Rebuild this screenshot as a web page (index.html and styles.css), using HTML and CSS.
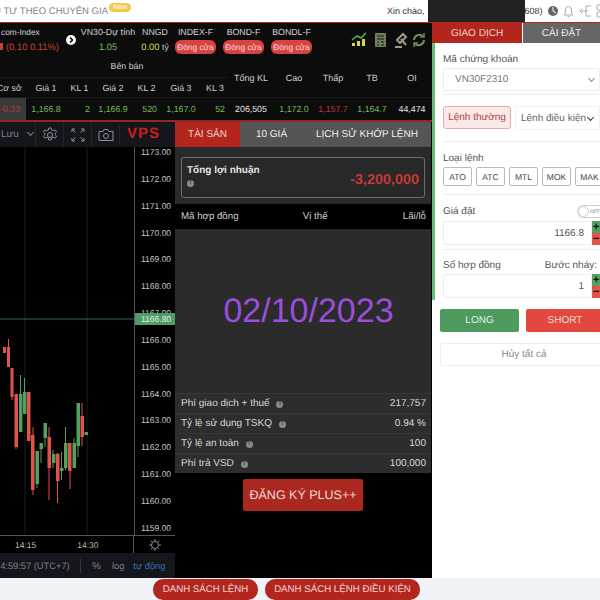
FILE: index.html
```html
<!DOCTYPE html>
<html>
<head>
	<title>Giao dịch phái sinh</title>
	<meta http-equiv="Content-Type" content="text/html;charset=utf-8" />
	<link rel="stylesheet" href="styles.css">
</head>
<body>

<div class="topbar">
	<div class="top-left"><span class="top-link">ĐẦU TƯ THEO CHUYÊN GIA</span><span class="new-tag">New</span></div>
	<div class="top-right">
		<span class="hello">Xin chào,</span>
		<span class="hidden-name"></span>
		<span class="hello">608)</span>
		<svg class="top-icons" width="52" height="16" viewBox="0 0 52 16">
			<circle cx="5" cy="8" r="5" fill="#666"/>
			<path d="M5 4v4l3 2" stroke="#fff" fill="none"/>
			<path d="M25 12h-9c1-1 1.500-2 1.500-5a3 3.500 0 0 1 6 0c0 3 .5 4 1.500 5zM19.500 13.500h2" stroke="#aaa" fill="none"/>
			<path d="M43 3h-5v10h5M40 8h-8M34.500 5.500L32 8l2.500 2.500" stroke="#aaa" fill="none"/>
			<rect x="49" y="2" width="6" height="5" rx="1" stroke="#aaa" fill="none"/>
			<rect x="49" y="9" width="6" height="5" rx="1" stroke="#aaa" fill="none"/>
		</svg>
	</div>
</div>

<div class="main">
	<div class="left">
		<div class="quotes">
			<div class="market">
				<div class="m-index"><div class="m-name">com-Index</div><div class="m-val red"><span class="down-arrow"></span>(0.10 0.11%)</div></div>
				<div class="m-next"><svg width="10" height="10" viewBox="0 0 10 10"><circle cx="5" cy="5" r="5" fill="#fff"/><path d="M4 2.500L6.500 5L4 7.500" stroke="#000" stroke-width="1.500" fill="none"/></svg></div>
				<div class="m-vn30"><div class="m-name">VN30-Dự tính</div><div class="m-val green">1.05</div></div>
				<div class="m-nngd"><div class="m-name">NNGD</div><div class="m-val"><span class="yellow">0.00</span> <span class="unit">tỷ</span></div></div>
				<div class="m-fut"><div class="m-name">INDEX-F</div><div class="pill">Đóng cửa</div></div>
				<div class="m-fut"><div class="m-name">BOND-F</div><div class="pill">Đóng cửa</div></div>
				<div class="m-fut"><div class="m-name">BONDL-F</div><div class="pill">Đóng cửa</div></div>
				<svg class="m-tools" width="76" height="16" viewBox="0 0 76 16">
					<path d="M1 14v-3h3v3zM6 14V9h3v5zM11 14V7h3v7z" fill="#d8d84a"/>
					<path d="M1 8l5-4 4 2 5-5" stroke="#5fb04f" stroke-width="1.500" fill="none"/>
					<rect x="24" y="1" width="11" height="14" rx="1" fill="#6d7f5c"/>
					<path d="M26 4h7M26 7h7M26 10h2M30 10h3M26 13h2M30 13h3" stroke="#1a1a1a"/>
					<path d="M44 15h7M46 8l6-6 3 3-6 6zM50 7l5 6" stroke="#9a9a8a" stroke-width="2" fill="none"/>
					<path d="M63 8a5.500 5.500 0 0 1 9-4M73 8a5.500 5.500 0 0 1-9 4" stroke="#6d8f5c" stroke-width="2" fill="none"/>
					<path d="M73 1v4h-4M63 15v-4h4" stroke="#6d8f5c" stroke-width="1.500" fill="none"/>
				</svg>
			</div>
			<div class="grid">
				<div class="g-spacer"></div>
				<div class="g-sell">Bên bán</div>
				<div class="g-total">Tổng KL</div>
				<div class="g-high">Cao</div>
				<div class="g-low">Thấp</div>
				<div class="g-avg">TB</div>
				<div class="g-oi">OI</div>
				<div class="g-head g-first">Cơ sở</div>
				<div class="g-head">Giá 1</div>
				<div class="g-head">KL 1</div>
				<div class="g-head">Giá 2</div>
				<div class="g-head">KL 2</div>
				<div class="g-head">Giá 3</div>
				<div class="g-head">KL 3</div>
				<div class="g-cell g-basis red">-0.33</div>
				<div class="g-cell green">1,166.8</div>
				<div class="g-cell g-qty green">2</div>
				<div class="g-cell green">1,166.9</div>
				<div class="g-cell g-qty green">520</div>
				<div class="g-cell green">1,167.0</div>
				<div class="g-cell g-qty green">52</div>
				<div class="g-cell">206,505</div>
				<div class="g-cell green">1,172.0</div>
				<div class="g-cell red">1,157.7</div>
				<div class="g-cell green">1,164.7</div>
				<div class="g-cell">44,474</div>
			</div>
		</div>

		<div class="lower">
			<div class="chart">
				<div class="chart-tools">
					<span class="save">Lưu <span class="caret"></span></span>
					<span class="tool"><svg width="16" height="16" viewBox="0 0 16 16" fill="none" stroke="#8b8e96"><circle cx="8" cy="8" r="2.500"/><path d="M6.800 1h2.400l.4 2 1.700.8 1.800-1 1.500 2-1.400 1.400v1.600l1.400 1.400-1.500 2-1.800-1-1.700.8-.4 2H6.800l-.4-2-1.700-.8-1.800 1-1.500-2 1.400-1.400V6.200L1.400 4.800l1.500-2 1.800 1 1.700-.8z"/></svg></span>
					<span class="tool"><svg width="14" height="14" viewBox="0 0 14 14" fill="none" stroke="#8b8e96"><path d="M1 4V1h3M10 1h3v3M13 10v3h-3M4 13H1v-3M1 1l3.500 3.500M13 1L9.500 4.500M13 13L9.500 9.500M1 13l3.500-3.500"/></svg></span>
					<span class="tool"><svg width="16" height="14" viewBox="0 0 16 14" fill="none" stroke="#8b8e96"><path d="M1 3.500h4l1-2h4l1 2h4v9H1z"/><circle cx="8" cy="8" r="2.500"/></svg></span>
					<span class="vps">VPS</span>
				</div>
				<div class="chart-body">
					<div class="plot">
						<svg width="134" height="388" viewBox="0 147 134 388">
							<g stroke="#1a1c20">
								<line x1="25" y1="147" x2="25" y2="535"/>
								<line x1="87" y1="147" x2="87" y2="535"/>
							</g>
							<line x1="0" y1="319" x2="134" y2="319" stroke="#3d6b4a"/>
							<g class="bear">
								<rect x="3" y="347" width="3" height="6"/>
								<rect x="7" y="347" width="3" height="20"/>
								<line x1="8.500" y1="339" x2="8.500" y2="347"/>
								<rect x="10.500" y="368" width="3" height="29"/>
								<line x1="12" y1="397" x2="12" y2="400"/>
								<rect x="14.500" y="394" width="3.500" height="53"/>
								<line x1="16" y1="447" x2="16" y2="449"/>
								<rect x="27" y="392" width="3.500" height="49"/>
								<rect x="31" y="435" width="3.500" height="55"/>
								<line x1="33" y1="427" x2="33" y2="495"/>
								<rect x="47.500" y="437" width="3.500" height="31"/>
								<line x1="49" y1="427" x2="49" y2="500"/>
								<rect x="56" y="454" width="3.500" height="27"/>
								<line x1="57.500" y1="453" x2="57.500" y2="503"/>
								<rect x="68" y="443" width="3.500" height="28"/>
								<line x1="70" y1="443" x2="70" y2="489"/>
								<rect x="80.500" y="416" width="3.500" height="21"/>
								<line x1="82" y1="403" x2="82" y2="446"/>
							</g>
							<g class="bull">
								<rect x="19" y="394" width="3.500" height="38"/>
								<line x1="20.500" y1="375" x2="20.500" y2="394"/>
								<rect x="23" y="392" width="3.500" height="22"/>
								<line x1="24.500" y1="378" x2="24.500" y2="392"/>
								<rect x="35.500" y="451" width="3.500" height="33"/>
								<line x1="37" y1="484" x2="37" y2="488"/>
								<rect x="39.500" y="443" width="3.500" height="6"/>
								<line x1="41" y1="449" x2="41" y2="463"/>
								<rect x="43.500" y="423" width="3.500" height="15"/>
								<line x1="45" y1="438" x2="45" y2="447"/>
								<rect x="52" y="454" width="3.500" height="9"/>
								<line x1="53" y1="450" x2="53" y2="468"/>
								<rect x="60" y="468" width="3.500" height="3"/>
								<line x1="61.500" y1="452" x2="61.500" y2="480"/>
								<rect x="64" y="443" width="3.500" height="25"/>
								<line x1="65.500" y1="427" x2="65.500" y2="470"/>
								<rect x="72.500" y="443" width="3.500" height="25"/>
								<line x1="74" y1="438" x2="74" y2="468"/>
								<rect x="76.500" y="403" width="3.500" height="43"/>
								<line x1="78" y1="446" x2="78" y2="457"/>
								<rect x="84.500" y="432" width="3.500" height="3"/>
							</g>
						</svg>
					</div>
					<div class="axis">
						<span>1173.00</span><span>1172.00</span><span>1171.00</span><span>1170.00</span><span>1169.00</span><span>1168.00</span><span>1167.00</span><span>1166.00</span><span>1165.00</span><span>1164.00</span><span>1163.00</span><span>1162.00</span><span>1161.00</span><span>1160.00</span><span>1159.00</span>
						<span class="last-price">1166.80</span>
					</div>
				</div>
				<div class="time-row">
					<div class="times"><span>14:15</span><span>14:30</span></div>
					<div class="time-cog"><svg width="12" height="12" viewBox="0 0 12 12" fill="none" stroke="#8b8e96"><circle cx="6" cy="6" r="3.500"/><path d="M6 0v2M6 10v2M0 6h2M10 6h2M1.800 1.800l1.400 1.400M8.800 8.800l1.400 1.400M1.800 10.200l1.400-1.400M8.800 3.200l1.400-1.400"/></svg></div>
				</div>
				<div class="status">
					<span class="clock">14:59:57 (UTC+7)</span>
					<span class="st-sep"></span>
					<span class="st-pct">%</span>
					<span class="st-log">log</span>
					<span class="st-auto">tự động</span>
				</div>
			</div>

			<div class="assets">
				<div class="tabs">
					<div class="tab tab-active">TÀI SẢN</div>
					<div class="tab tab-price">10 GIÁ</div>
					<div class="tab tab-history">LỊCH SỬ KHỚP LỆNH</div>
				</div>
				<div class="profit-wrap">
					<div class="profit">
						<div>
							<div class="profit-label">Tổng lợi nhuận</div>
							<span class="info info-low">!</span>
						</div>
						<div class="profit-val">-3,200,000</div>
					</div>
				</div>
				<div class="pos-head"><span>Mã hợp đồng</span><span class="pos-mid">Vị thế</span><span>Lãi/lỗ</span></div>
				<div class="pos-body">02/10/2023</div>
				<div class="fees">
					<div class="fee"><span>Phí giao dịch + thuế <span class="info">!</span></span><span>217,757</span></div>
					<div class="fee"><span>Tỷ lệ sử dụng TSKQ <span class="info">!</span></span><span>0.94 %</span></div>
					<div class="fee"><span>Tỷ lệ an toàn <span class="info">!</span></span><span>100</span></div>
					<div class="fee"><span>Phí trả VSD <span class="info">!</span></span><span>100,000</span></div>
				</div>
				<div class="plus-wrap"><div class="plus-btn">ĐĂNG KÝ PLUS++</div></div>
			</div>
		</div>
	</div>

	<div class="right">
		<div class="r-tabs">
			<div class="r-tab r-tab-active">GIAO DỊCH</div>
			<div class="r-tab">CÀI ĐẶT</div>
		</div>
		<div class="form">
			<div class="sec sec-code">
				<div class="lbl">Mã chứng khoán</div>
				<div class="box code-box"><span>VN30F2310</span><span class="chev"></span></div>
			</div>
			<div class="sec sec-kind">
				<div class="kind-on">Lệnh thường</div>
				<div class="kind-off">Lệnh điều kiện <span class="chev chev-dark"></span></div>
			</div>
			<div class="sec sec-type">
				<div class="lbl">Loại lệnh</div>
				<div class="types"><span>ATO</span><span>ATC</span><span>MTL</span><span>MOK</span><span>MAK</span></div>
			</div>
			<div class="sec sec-price">
				<div class="lbl-row"><span class="lbl">Giá đặt</span><span class="toggle"><span class="knob"></span>OFF</span></div>
				<div class="stepper">
					<div class="box step-val">1166.8</div>
					<div class="step-btns"><span class="plus">+</span><span class="minus">−</span></div>
				</div>
			</div>
			<div class="sec-qty">
				<div class="lbl-row"><span class="lbl">Số hợp đồng</span><span class="lbl">Bước nháy:</span></div>
				<div class="stepper">
					<div class="box step-val">1</div>
					<div class="step-btns"><span class="plus">+</span><span class="minus">−</span></div>
				</div>
			</div>
		</div>
		<div class="actions">
			<div class="act-btn long">LONG</div>
			<div class="act-btn short">SHORT</div>
		</div>
		<div class="cancel">Hủy tất cả</div>
	</div>
</div>

<div class="footer">
	<div class="foot-btn foot-a">DANH SÁCH LỆNH</div>
	<div class="foot-btn foot-b">DANH SÁCH LỆNH ĐIỀU KIỆN</div>
</div>

</body>
</html>
```

FILE: styles.css
```css
html { height:100%; }
body { width:600px; height:600px; overflow:hidden; margin:0; padding:0; font-family:"Liberation Sans", Arial, sans-serif; font-size:10px; color:#e8e8e8; background-color:#fff; display:flex; flex-direction:column; text-rendering:geometricPrecision; }
.red { color:#c9403a; }
.green { color:#74bd55; }
.yellow { color:#d9d94e; }

/* header */
.topbar { height:22px; flex:none; display:flex; justify-content:space-between; background:#fff; color:#555; font-size:10px; border-bottom:1px solid #b3261e; }
.top-left { width:131px; display:flex; justify-content:flex-end; align-items:center; overflow:hidden; white-space:nowrap; flex:none; }
.top-link { color:#80848c; font-size:9.5px; margin-top:1px; }
.new-tag { background:#f4c64a; color:#fff; font-size:7px; border-radius:5px; padding:1px 4px; margin:-7px 0 0 1px; }
.top-right { width:213px; display:flex; align-items:center; color:#333; font-size:9px; overflow:hidden; flex:none; }
.hello { white-space:nowrap; flex:none; }
.hidden-name { width:97px; height:22px; background:#222; margin:0 0 0 3px; flex:none; }
.top-icons { margin-left:5px; flex:none; overflow:visible; }

.main { flex:1; display:flex; min-height:0; }
.left { width:432px; flex:none; background:#000; display:flex; flex-direction:column; }
.right { width:168px; flex:none; background:#fff; color:#555; overflow:hidden; }

/* quote board */
.quotes { height:97px; flex:none; background:#0c0c0c; border-bottom:2px solid #8c2a28; font-size:8.8px; }
.market { height:32px; display:flex; align-items:center; overflow:hidden; padding-top:1px; box-sizing:border-box; }
.m-name { color:#d4d4d4; font-size:8.8px; line-height:13px; white-space:nowrap; }
.m-val { font-size:9.4px; line-height:14px; margin-top:1px; white-space:nowrap; }
.m-index { width:66px; flex:none; }
.m-index .m-name { padding-left:1px; font-size:8.3px; }
.down-arrow { display:inline-block; width:3px; height:7px; background:#c9403a; margin-right:3px; }
.m-next { width:14px; flex:none; display:flex; }
.m-vn30 { width:56px; flex:none; text-align:center; }
.m-nngd { width:36px; flex:none; text-align:center; margin-left:1px; }
.unit { font-size:8.5px; color:#cfcfcf; }
.m-fut { width:41px; margin-left:7px; flex:none; text-align:center; }
.m-fut:nth-of-type(5) { margin-left:2px; }
.pill { background:#d9433f; color:#f6dede; border-radius:6px; font-size:8.3px; line-height:14px; margin-top:1px; }
.m-tools { margin-left:39px; flex:none; }

.grid { display:grid; grid-template-columns:26px 40px 27px 40px 27px 42px 26px 46px 40px 38px 40px 40px; grid-template-rows:23px 20px 22px; }
.grid > div { display:flex; align-items:center; justify-content:center; white-space:nowrap; color:#d0d0d0; border-bottom:1px solid #181818; }
.g-sell { grid-column:2 / 8; grid-row:1; }
.g-spacer { grid-column:1; grid-row:1; }
.g-total, .g-high, .g-low, .g-avg, .g-oi { grid-row:1 / 3; padding-top:3px; font-size:9px; }
.g-total { grid-column:8; }
.g-high { grid-column:9; }
.g-low { grid-column:10; }
.g-avg { grid-column:11; }
.g-oi { grid-column:12; }
.g-first { justify-content:flex-start !important; margin-left:-3px; }
.grid > .g-cell { color:#e8e8e8; font-size:8.8px; border-bottom:0; }
.grid > .g-cell.green { color:#74bd55; }
.grid > .g-cell.red { color:#b83a3a; }
.grid > .g-qty { justify-content:flex-end; padding-right:3px; }
.grid > .g-basis { background:#3a3a3a; color:#c9403a; justify-content:flex-start; }

/* chart + assets */
.lower { flex:1; display:flex; min-height:0; }
.chart { width:175px; flex:none; display:flex; flex-direction:column; background:#000; }
.chart-tools { height:25px; flex:none; background:#14161c; display:flex; align-items:center; color:#7d8088; font-size:10px; overflow:hidden; }
.save { width:35px; flex:none; padding-left:1px; box-sizing:border-box; white-space:nowrap; }
.caret { display:inline-block; width:4px; height:4px; border-right:1px solid #7d8088; border-bottom:1px solid #7d8088; transform:rotate(45deg); margin:0 0 2px 6px; }
.tool { width:28px; height:25px; flex:none; display:flex; align-items:center; justify-content:center; border-left:1px solid #22242a; box-sizing:border-box; }
.vps { width:56px; flex:none; box-sizing:border-box; padding:0 8px 2px 0; text-align:center; color:#c8201c; font-weight:bold; font-size:15px; letter-spacing:1px; border-left:1px solid #22242a; }
.chart-body { height:388px; flex:none; display:flex; overflow:hidden; }
.plot { width:134px; flex:none; border-right:1px solid #555; display:flex; }
.bear { fill:#e2534a; stroke:#e2534a; stroke-width:0; }
.bull { fill:#54a060; stroke:#54a060; stroke-width:0; }
.bear line, .bull line { stroke-width:1; }
.axis { flex:1; position:relative; display:flex; flex-direction:column; font-size:8.5px; color:#c8c8c8; box-sizing:border-box; }
.axis span { height:26.85px; line-height:10px; padding-left:6px; flex:none; }
.last-price { position:absolute; left:0; top:166px; width:41px; height:12px !important; line-height:12px !important; background:#4f9d66; color:#e4f2e8; padding-left:6px !important; box-sizing:border-box; }
.time-row { height:17px; flex:none; display:flex; border-top:1px solid #555; color:#b8b8b8; font-size:8.5px; }
.times { width:134px; flex:none; display:flex; gap:41px; padding:4px 0 0 15px; box-sizing:border-box; border-right:1px solid #555; }
.time-cog { flex:1; display:flex; justify-content:center; padding-top:3px; }
.status { height:26px; flex:none; background:#14161c; display:flex; align-items:center; color:#7d8088; font-size:9.3px; white-space:nowrap; overflow:hidden; }
.clock { margin-left:-5px; width:85px; flex:none; }
.st-sep { width:1px; height:14px; background:#33363d; margin-right:11px; flex:none; }
.st-pct { margin-right:11px; font-size:10px; }
.st-log { margin-right:9px; }
.st-auto { color:#3a6fb0; }

.assets { flex:1; display:flex; flex-direction:column; background:#000; border-right:1px solid #000; min-width:0; }
.tabs { height:25px; flex:none; display:flex; font-size:10px; }
.tab { display:flex; align-items:center; justify-content:center; background:#555; color:#eee; white-space:nowrap; }
.tab-active { width:65px; background:#b3261e; color:#f2d4d0; }
.tab-price { width:63px; }
.tab-history { flex:1; }
.profit-wrap { height:57px; flex:none; background:#2a2a2a; padding:10px 6px 6px; box-sizing:border-box; }
.profit { height:41px; border:1px solid #6c6c6c; border-radius:3px; background:#282828; display:flex; justify-content:space-between; padding:7px 5px 0; box-sizing:border-box; }
.profit-label { font-size:10px; font-weight:bold; color:#e4e4e4; margin-bottom:4px; }
.profit-val { font-size:14.4px; font-weight:bold; color:#c33a36; margin-top:7px; }
.info { display:inline-block; width:7px; height:7px; border-radius:50%; background:#8a8a8a; color:#2a2a2a; font-size:6px; line-height:7px; text-align:center; margin-left:3px; font-weight:bold; vertical-align:1px; }
.info-low { margin-left:0; display:block; }
.pos-head { height:25px; flex:none; display:flex; justify-content:space-between; align-items:center; padding:0 5px 0 6px; font-size:9.7px; color:#cfcfcf; background:#000; }
.pos-mid { margin-right:11px; }
.pos-body { height:164px; flex:none; box-sizing:border-box; padding-left:11px; background:#2b2b2b; display:flex; align-items:center; justify-content:center; color:#9a4edc; font-size:34px; }
.fees { flex:none; background:#2d2d2d; }
.fee { height:20px; display:flex; justify-content:space-between; align-items:center; padding:0 5px 0 6px; font-size:10px; color:#d8d8d8; border-top:1px solid #383838; box-sizing:border-box; }
.fee .info { margin-left:4px; }
.plus-wrap { flex:1; display:flex; justify-content:center; align-items:flex-start; padding-top:6px; }
.plus-btn { width:120px; height:32px; background:#ab2820; color:#f0d8d4; border-radius:2px; font-size:12.5px; display:flex; align-items:center; justify-content:center; }

/* order form */
.r-tabs { height:20px; display:flex; font-size:10px; }
.r-tab { flex:1; display:flex; align-items:center; justify-content:center; background:#666; color:#eee; }
.r-tab-active { width:90px; flex:none; background:#b3261e; color:#f2d4d0; margin-right:1px; }
.form { height:257px; border-left:3px solid #6cbb78; padding-left:8px; box-sizing:border-box; width:200px; font-size:10px; color:#555; }
.sec { border-bottom:1px solid #eee; margin-left:0; }
.lbl { font-size:10px; color:#555; white-space:nowrap; }
.box { border:1px solid #eee; border-radius:2px; box-sizing:border-box; }
.sec-code { height:52px; padding-top:11px; box-sizing:border-box; margin-left:0; }
.code-box { width:157px; height:23px; margin-top:3px; display:flex; align-items:center; justify-content:space-between; padding:0 5px 0 11px; color:#777; font-size:10px; }
.chev { display:inline-block; width:4px; height:4px; border-right:1px solid #888; border-bottom:1px solid #888; transform:rotate(45deg); margin-bottom:2px; }
.chev-dark { border-color:#333; margin-left:2px; }
.sec-kind { height:47px; display:flex; padding-top:11px; box-sizing:border-box; }
.kind-on { width:68px; height:23px; background:#fbe9e9; border:1px solid #e0b0b0; border-radius:3px; box-sizing:border-box; color:#b3403a; display:flex; align-items:center; justify-content:center; font-size:10px; }
.kind-off { margin-left:4px; width:85px; height:24px; border:1px solid #f2f2f2; box-sizing:border-box; display:flex; align-items:center; padding-left:5px; white-space:nowrap; color:#666; font-size:10px; }
.sec-type { height:53px; padding-top:11px; box-sizing:border-box; }
.types { display:flex; gap:4px; margin-top:3px; }
.types span { flex:none; width:29px; height:19px; border:1px solid #bbb; border-radius:2px; box-sizing:border-box; display:flex; align-items:center; justify-content:center; font-size:8.5px; color:#444; }
.sec-price { height:55px; padding-top:7px; box-sizing:border-box; }
.sec-qty { padding-top:6px; }
.lbl-row { width:157px; height:19px; display:flex; justify-content:space-between; align-items:center; }
.sec-qty .lbl-row { height:18px; width:154px; }
.toggle { width:30px; height:13px; margin-right:-7px; border:1px solid #ccc; border-radius:7px; box-sizing:border-box; display:flex; align-items:center; font-size:5px; color:#777; overflow:hidden; flex:none; }
.knob { width:11px; height:11px; border-radius:50%; border:1px solid #ccc; box-sizing:border-box; margin-right:1px; flex:none; }
.stepper { display:flex; width:157px; height:24px; }
.step-val { width:149px; flex:none; display:flex; align-items:center; justify-content:flex-end; padding-right:7px; color:#555; font-size:10px; }
.step-btns { width:20px; flex:none; display:flex; flex-direction:column; }
.step-btns span { height:12px; line-height:12px; font-size:11px; font-weight:bold; color:#111; padding-left:1px; }
.plus { background:#54a060; }
.minus { background:#e2534a; }
.actions { display:flex; gap:7px; padding:9px 0 0 8px; width:200px; box-sizing:border-box; }
.act-btn { height:23px; border-radius:2px; display:flex; align-items:center; justify-content:center; font-size:10px; color:#e4f2e8; box-sizing:border-box; }
.long { width:79px; background:#4f9a5f; }
.short { width:78px; background:#e2483e; color:#f8dcd8; }
.cancel { width:168px; height:23px; margin:11px 0 0 8px; border:1px solid #eee; border-radius:2px; box-sizing:border-box; display:flex; align-items:center; justify-content:center; color:#888; font-size:10px; }

/* footer */
.footer { height:22px; flex:none; background:#eff2f6; display:flex; align-items:center; padding-left:153px; gap:7px; overflow:hidden; }
.foot-btn { height:21px; border-radius:10px; background:#b3261e; color:#f2d4d0; font-size:9.7px; display:flex; align-items:center; justify-content:center; }
.foot-a { width:105px; }
.foot-b { width:155px; }
```
